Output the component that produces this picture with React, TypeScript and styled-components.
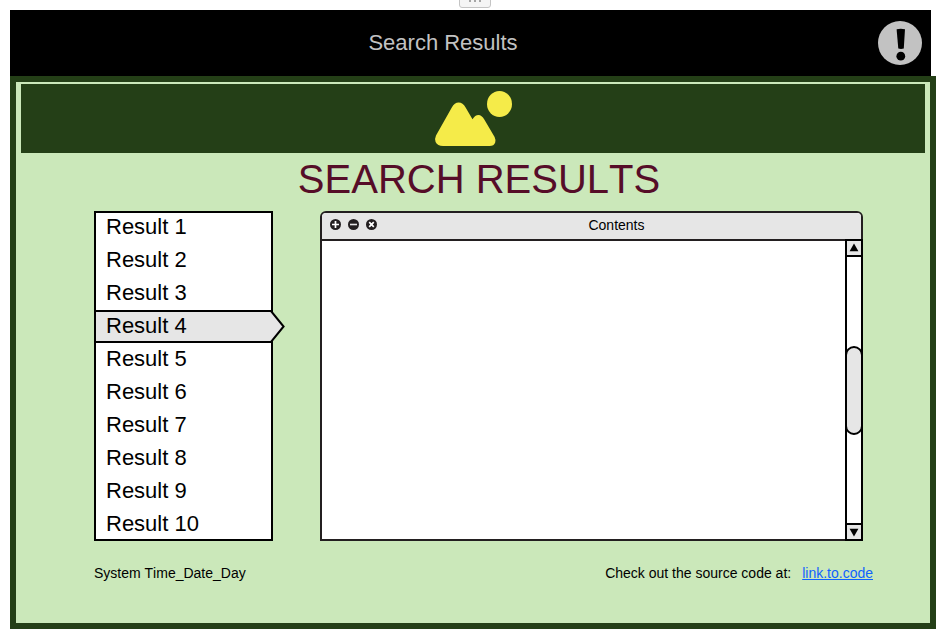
import React from "react";
import styled, { createGlobalStyle, css } from "styled-components";

const GlobalStyle = createGlobalStyle`
  html, body { margin: 0; padding: 0; background: #fff; }
  * { box-sizing: border-box; }
  body {
    font-family: "Liberation Sans", Arial, sans-serif;
    font-kerning: none;
    color: #000;
    overflow: hidden;
  }
`;

const Page = styled.div`
  width: 948px;
  height: 636px;
  padding: 10px 12px 7px 10px;
  display: flex;
  flex-direction: column;
  position: relative;
`;

const Handle = styled.div`
  position: absolute;
  top: -10px;
  left: 459px;
  width: 32px;
  height: 18px;
  display: flex;
  justify-content: center;
  align-items: flex-end;
  padding-bottom: 5px;
  gap: 3px;
  border: 1px solid #c4c4c4;
  border-radius: 3px;
  background: #f5f5f5;
`;

const HandleDot = styled.span`
  width: 2px;
  height: 2px;
  background: #a6a6a6;
`;

const TopBar = styled.header`
  width: 921px;
  height: 66px;
  flex: none;
  display: grid;
  grid-template-columns: 54px 1fr 54px;
  align-items: center;
  background: #000;
`;

const TopTitle = styled.div`
  grid-column: 2;
  padding-right: 55px;
  text-align: center;
  font-size: 22px;
  line-height: 26px;
  color: #c2c2c2;
`;

const AlertIcon = styled.svg`
  display: block;
  width: 46px;
  height: 46px;
`;

const Frame = styled.main`
  width: 926px;
  height: 553px;
  flex: none;
  border: 6px solid #243f17;
  background: #cbe8ba;
  padding: 2px 5px 0;
`;

const Banner = styled.div`
  height: 69px;
  background: #243f17;
  display: flex;
  justify-content: center;
`;

const Picture = styled.svg`
  display: block;
  width: 80px;
  height: 69px;
`;

const Heading = styled.h1`
  margin: 0;
  height: 58px;
  padding: 3px 0 0 12px;
  text-align: center;
  font-size: 40px;
  line-height: 46px;
  font-weight: 400;
  color: #560d28;
`;

const Columns = styled.div`
  display: flex;
  gap: 47px;
  padding-left: 73px;
`;

const ResultList = styled.ul`
  list-style: none;
  margin: 0;
  padding: 0;
  width: 179px;
  height: 330px;
  background: #fff;
  box-shadow: inset 0 0 0 2px #000;
`;

const ResultRow = styled.li<{ $selected: boolean }>`
  position: relative;
  height: 33px;
  padding-left: 12px;
  font-size: 22px;
  line-height: 32px;
  ${({ $selected }) =>
    $selected &&
    css`
      border: solid #000;
      border-width: 2px 0 2px 2px;
      padding-left: 10px;
      line-height: 28px;
      background: #e6e6e6;
    `}
`;

const Pointer = styled.svg`
  position: absolute;
  top: -2px;
  right: -12px;
  width: 16px;
  height: 33px;
`;

const Window = styled.section`
  width: 543px;
  height: 330px;
  display: flex;
  flex-direction: column;
  border: 2px solid #231f20;
  border-radius: 6px 6px 0 0;
  background: #fff;
`;

const WindowBar = styled.div`
  height: 26px;
  flex: none;
  display: grid;
  grid-template-columns: 60px 1fr 60px;
  align-items: center;
  padding-bottom: 2px;
  border-radius: 4px 4px 0 0;
  background: #e6e6e6;
`;

const Controls = styled.div`
  display: flex;
  gap: 6px;
  padding-left: 8px;
  margin-top: -1px;
`;

const ControlIcon = styled.svg`
  display: block;
  flex: none;
  width: 12px;
  height: 12px;
`;

const WindowTitle = styled.div`
  padding-left: 50px;
  text-align: center;
  font-size: 14px;
  line-height: 18px;
`;

const WindowBody = styled.div`
  flex: 1;
  display: flex;
  justify-content: flex-end;
  border-top: 2px solid #231f20;
`;

const ScrollBar = styled.div`
  width: 18px;
  height: 302px;
  margin: -2px -2px -2px 0;
  display: flex;
  flex-direction: column;
  border: 2px solid #000;
  background: #fff;
`;

const ScrollButton = styled.div<{ $end?: boolean }>`
  height: 16px;
  flex: none;
  border: 0 solid #000;
  ${({ $end }) => ($end ? "border-top-width: 2px;" : "border-bottom-width: 2px;")}
  background: #e6e6e6;
`;

const Arrow = styled.svg`
  display: block;
  width: 14px;
  height: 14px;
`;

const Track = styled.div`
  flex: 1;
  padding-top: 89px;
`;

const Thumb = styled.div`
  width: 18px;
  height: 89px;
  margin-left: -2px;
  border: 2px solid #000;
  border-radius: 9px;
  background: #e6e6e6;
`;

const Footer = styled.footer`
  display: flex;
  justify-content: space-between;
  padding: 24px 52px 0 73px;
  font-size: 14px;
  line-height: 16px;
`;

const SourceLink = styled.a`
  margin-left: 11px;
  color: #0f62fe;
  text-decoration: underline;
`;

const results = Array.from({ length: 10 }, (_, i) => `Result ${i + 1}`);
const selectedIndex = 3;

export default function App() {
  return (
    <>
      <GlobalStyle />
      <Page>
        <Handle>
          <HandleDot />
          <HandleDot />
          <HandleDot />
        </Handle>
        <TopBar>
          <TopTitle>Search Results</TopTitle>
          <AlertIcon viewBox="0 0 46 46">
            <circle cx="23" cy="23" r="22" fill="#c2c2c2" />
            <path d="M19.6 9.2Q23.8 8.2 28 9.2L26.8 28.6Q24 29.5 21.3 28.6Z" fill="#000" />
            <circle cx="23.8" cy="36.2" r="4.4" fill="#000" />
          </AlertIcon>
        </TopBar>
        <Frame>
          <Banner>
            <Picture viewBox="433 84 80 69">
              <g fill="#f5eb49">
                <ellipse cx="499.5" cy="104" rx="12.5" ry="13" />
                <path d="M436 135.5L451.8 107.5Q454.5 102.5 458.7 102.5Q462.8 102.5 465.6 107.5L472.5 119.3Q475 115 478.5 115Q481.7 115 484.3 119.5L494.6 137Q496 140 495.2 142.5Q494 146 489.5 146H443Q437.5 146 435.6 142Q434.5 138.5 436 135.5Z" />
              </g>
            </Picture>
          </Banner>
          <Heading>SEARCH RESULTS</Heading>
          <Columns>
            <ResultList>
              {results.map((label, i) => (
                <ResultRow key={label} $selected={i === selectedIndex}>
                  {label}
                  {i === selectedIndex && (
                    <Pointer viewBox="0 0 16 33">
                      <path d="M0 1H2L14.6 16.5L2 32H0Z" fill="#e6e6e6" />
                      <path d="M0 1H2L14.6 16.5L2 32H0" fill="none" stroke="#000" strokeWidth="2" />
                    </Pointer>
                  )}
                </ResultRow>
              ))}
            </ResultList>
            <Window>
              <WindowBar>
                <Controls>
                  <ControlIcon viewBox="0 0 12 12">
                    <circle cx="5.5" cy="5.5" r="5.5" fill="#231f20" />
                    <path d="M5.5 2V9M2 5.5H9" stroke="#fff" strokeWidth="1.7" />
                  </ControlIcon>
                  <ControlIcon viewBox="0 0 12 12">
                    <circle cx="5.5" cy="5.5" r="5.5" fill="#231f20" />
                    <path d="M2 5.5H9" stroke="#e6e6e6" strokeWidth="1.6" />
                  </ControlIcon>
                  <ControlIcon viewBox="0 0 12 12">
                    <circle cx="5.5" cy="5.5" r="5.5" fill="#231f20" />
                    <path d="M3.2 3.2L7.8 7.8M7.8 3.2L3.2 7.8" stroke="#fff" strokeWidth="1.7" />
                  </ControlIcon>
                </Controls>
                <WindowTitle>Contents</WindowTitle>
              </WindowBar>
              <WindowBody>
                <ScrollBar>
                  <ScrollButton>
                    <Arrow viewBox="0 0 14 14">
                      <path d="M2.6 10.2L7 2.6L11.4 10.2Z" />
                    </Arrow>
                  </ScrollButton>
                  <Track>
                    <Thumb />
                  </Track>
                  <ScrollButton $end>
                    <Arrow viewBox="0 0 14 14">
                      <path d="M2.6 3.8L7 11.4L11.4 3.8Z" />
                    </Arrow>
                  </ScrollButton>
                </ScrollBar>
              </WindowBody>
            </Window>
          </Columns>
          <Footer>
            <span>System Time_Date_Day</span>
            <span>
              Check out the source code at:
              <SourceLink href="#">link.to.code</SourceLink>
            </span>
          </Footer>
        </Frame>
      </Page>
    </>
  );
}
